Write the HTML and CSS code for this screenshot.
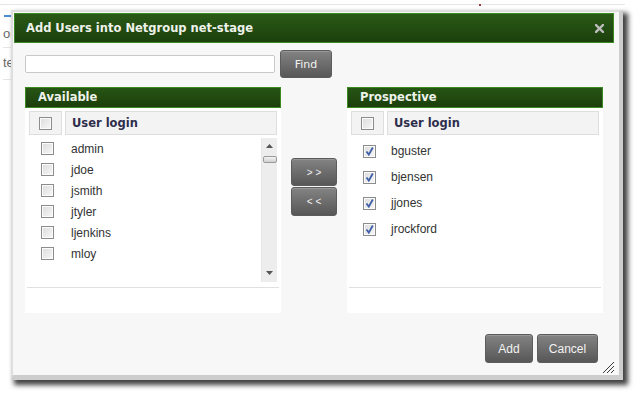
FILE: index.html
```html
<!DOCTYPE html>
<html>
<head>
<meta charset="utf-8">
<title>Add Users into Netgroup net-stage</title>
<link rel="stylesheet" href="styles.css">
</head>
<body>
<div class="page">
  <div class="topline"><span class="mark"></span></div>
  <div class="side">
    <div class="side-blue"></div>
    <div class="side-item side-item-1">one</div>
    <div class="side-item side-item-2">test</div>
  </div>
</div>

<div class="dialog">
  <div class="titlebar">
    <span class="title">Add Users into Netgroup net-stage</span>
    <svg class="close" width="9" height="9" viewBox="0 0 9 9"><path d="M1 1L8 8M8 1L1 8" stroke="#bdbdbd" stroke-width="2.4" stroke-linecap="square"/></svg>
  </div>

  <div class="search">
    <input class="search-input" type="text">
    <button class="btn btn-find">Find</button>
  </div>

  <div class="panels">
    <div class="panel">
      <div class="panel-head">Available</div>
      <div class="panel-body">
        <div class="thead">
          <div class="th th-check"><span class="cb"></span></div>
          <div class="th th-login">User login</div>
        </div>
        <div class="list">
          <div class="rows">
            <div class="row"><span class="cb"></span><span class="name">admin</span></div>
            <div class="row"><span class="cb"></span><span class="name">jdoe</span></div>
            <div class="row"><span class="cb"></span><span class="name">jsmith</span></div>
            <div class="row"><span class="cb"></span><span class="name">jtyler</span></div>
            <div class="row"><span class="cb"></span><span class="name">ljenkins</span></div>
            <div class="row"><span class="cb"></span><span class="name">mloy</span></div>
          </div>
          <div class="scrollbar">
            <svg class="arrow" width="7" height="4" viewBox="0 0 7 4"><path d="M0 4L3.5 0L7 4Z" fill="#555"/></svg>
            <div class="thumb"></div>
            <div class="spacer"></div>
            <svg class="arrow" width="7" height="4" viewBox="0 0 7 4"><path d="M0 0L7 0L3.5 4Z" fill="#555"/></svg>
          </div>
        </div>
        <div class="sep"></div>
      </div>
    </div>

    <div class="movers">
      <button class="btn btn-move">&gt;&gt;</button>
      <button class="btn btn-move btn-move-back">&lt;&lt;</button>
    </div>

    <div class="panel">
      <div class="panel-head">Prospective</div>
      <div class="panel-body">
        <div class="thead">
          <div class="th th-check"><span class="cb"></span></div>
          <div class="th th-login">User login</div>
        </div>
        <div class="list">
          <div class="rows rows-tall">
            <div class="row"><span class="cb cb-on"><svg width="11" height="11" viewBox="0 0 11 11"><path d="M2.5 5.5L4.8 8.6L8.8 1.5" fill="none" stroke="#3f5fa8" stroke-width="1.8"/></svg></span><span class="name">bguster</span></div>
            <div class="row"><span class="cb cb-on"><svg width="11" height="11" viewBox="0 0 11 11"><path d="M2.5 5.5L4.8 8.6L8.8 1.5" fill="none" stroke="#3f5fa8" stroke-width="1.8"/></svg></span><span class="name">bjensen</span></div>
            <div class="row"><span class="cb cb-on"><svg width="11" height="11" viewBox="0 0 11 11"><path d="M2.5 5.5L4.8 8.6L8.8 1.5" fill="none" stroke="#3f5fa8" stroke-width="1.8"/></svg></span><span class="name">jjones</span></div>
            <div class="row"><span class="cb cb-on"><svg width="11" height="11" viewBox="0 0 11 11"><path d="M2.5 5.5L4.8 8.6L8.8 1.5" fill="none" stroke="#3f5fa8" stroke-width="1.8"/></svg></span><span class="name">jrockford</span></div>
          </div>
        </div>
        <div class="sep"></div>
      </div>
    </div>
  </div>

  <div class="footer">
    <button class="btn btn-add">Add</button>
    <button class="btn btn-cancel">Cancel</button>
  </div>

  <svg class="grip" width="12" height="12" viewBox="0 0 12 12"><path d="M12 1L1 12M12 5L5 12M12 9L9 12" stroke="#3a3a3a" stroke-width="1"/></svg>
</div>
</body>
</html>
```

FILE: styles.css
```css
* { box-sizing: border-box; }

html, body {
  margin: 0;
  padding: 0;
  background: #ffffff;
}

body {
  width: 639px;
  height: 400px;
  overflow: hidden;
  position: relative;
  font-family: "Liberation Sans", Arial, sans-serif;
}

/* background page (covered by the dialog) */
.page {
  padding-top: 4px;
}

.topline {
  position: relative;
  width: 625px;
  height: 1px;
  background: #e6e6e6;
}

.mark {
  position: absolute;
  left: 479px;
  top: 0;
  width: 2px;
  height: 2px;
  background: #9a3a3a;
}

.side {
  width: 60px;
  margin-top: 10px;
  padding-left: 3px;
}

.side-blue {
  width: 8px;
  height: 2px;
  margin-left: 1px;
  background: #4a8fd0;
}

.side-item {
  white-space: nowrap;
  font-size: 13px;
  line-height: 14px;
  color: #6a6a6a;
  border-bottom: 1px solid #e6e6e6;
}

.side-item-1 { height: 31px; padding-top: 10px; }
.side-item-2 { height: 32px; padding-top: 8px; }

/* dialog */
.dialog {
  position: absolute;
  left: 11px;
  top: 10px;
  width: 612px;
  height: 370px;
  background: #f7f7f7;
  border-style: solid;
  border-color: #dedede #cdcdcd #cdcdcd #dedede;
  border-width: 2px 4px 5px 2px;
  box-shadow: 4px 4px 5px 1px rgba(0, 0, 0, 0.75);
}

.titlebar {
  margin: 1px 5px 0 1px;
  height: 30px;
  border: 1px solid #3a8c20;
  background: linear-gradient(#2a5a17, #1b3f0c);
  display: flex;
  align-items: center;
  justify-content: space-between;
  padding: 0 9px 0 11px;
}

.title {
  font-family: "DejaVu Sans", Verdana, sans-serif;
  font-weight: bold;
  font-size: 11.5px;
  color: #eef2ea;
}

.close { display: block; }

.search {
  margin-top: 7px;
  padding-left: 12px;
  display: flex;
  align-items: center;
  gap: 5px;
}

.search-input {
  width: 250px;
  height: 18px;
  margin: 0;
  border: 1px solid #cacaca;
  border-radius: 2px;
  background: #fff;
  outline: none;
}

.btn {
  margin: 0;
  padding: 0;
  border: 1px solid #5c5c5c;
  border-radius: 3px;
  background: linear-gradient(#838383, #575757);
  color: #f2f2f2;
  box-shadow: inset 0 1px 0 rgba(255, 255, 255, 0.18);
  font-family: "DejaVu Sans", Verdana, sans-serif;
  font-size: 11px;
}

.btn-find {
  width: 52px;
  height: 28px;
}

.panels {
  margin-top: 9px;
  padding-left: 12px;
  display: flex;
  gap: 10px;
}

.panel {
  width: 256px;
}

.panel-head {
  height: 21px;
  border: 1px solid #3a8c20;
  background: linear-gradient(#275514, #1b3f0c);
  padding-left: 12px;
  font-family: "DejaVu Sans", Verdana, sans-serif;
  font-weight: bold;
  font-size: 11.5px;
  line-height: 19px;
  color: #eef2ea;
}

.panel-body {
  height: 205px;
  background: #ffffff;
  padding: 3px 4px 0 4px;
}

.thead {
  display: flex;
  gap: 3px;
  height: 24px;
}

.th {
  background: #f3f3f3;
  border: 1px solid #dedede;
}

.th-check {
  width: 33px;
  display: flex;
  align-items: center;
  justify-content: center;
}

.th-login {
  flex: 1;
  padding-left: 6px;
  font-family: "DejaVu Sans", Verdana, sans-serif;
  font-weight: bold;
  font-size: 11.5px;
  line-height: 22px;
  color: #2e2e4c;
}

.list {
  margin-top: 3px;
  height: 144px;
  display: flex;
}

.rows {
  flex: 1;
}

.row {
  height: 21px;
  display: flex;
  align-items: center;
  padding-left: 12px;
}

.rows-tall .row {
  height: 26px;
}

.cb {
  width: 13px;
  height: 13px;
  flex: none;
  border: 1px solid #8c8c8c;
  background: linear-gradient(135deg, #dcdcdc, #f7f7f7);
  box-shadow: inset 0 0 0 1px #fbfbfb;
  display: flex;
  align-items: center;
  justify-content: center;
}

.cb svg { display: block; }

.name {
  margin-left: 17px;
  font-size: 12px;
  color: #333333;
}

.rows-tall .name {
  margin-left: 15px;
}

.scrollbar {
  width: 16px;
  background: #ededed;
  border-left: 1px solid #e6e6e6;
  display: flex;
  flex-direction: column;
  align-items: center;
  padding: 6px 0 7px 0;
}

.arrow { display: block; flex: none; }

.thumb {
  margin-top: 8px;
  width: 14px;
  height: 7px;
  border: 1px solid #9a9a9a;
  border-radius: 2px;
  background: linear-gradient(#f4f4f4, #cfcfcf);
}

.spacer { flex: 1; }

.sep {
  margin: 5px -2px 0 -2px;
  height: 1px;
  background: #e0e0e0;
}

.movers {
  width: 46px;
  padding-top: 71px;
  display: flex;
  flex-direction: column;
  gap: 1px;
}

.btn-move {
  width: 46px;
  height: 28px;
  font-family: "Liberation Sans", Arial, sans-serif;
  font-size: 10px;
  letter-spacing: 3px;
  padding-left: 3px;
}

.btn-move-back { height: 29px; }

.footer {
  margin-top: 21px;
  padding-right: 21px;
  display: flex;
  justify-content: flex-end;
  gap: 4px;
}

.btn-add,
.btn-cancel {
  height: 29px;
  font-family: "Liberation Sans", Arial, sans-serif;
  font-size: 12px;
}

.btn-add { width: 48px; }
.btn-cancel { width: 61px; }

.grip {
  position: absolute;
  right: 5px;
  bottom: 2px;
  display: block;
}
```
